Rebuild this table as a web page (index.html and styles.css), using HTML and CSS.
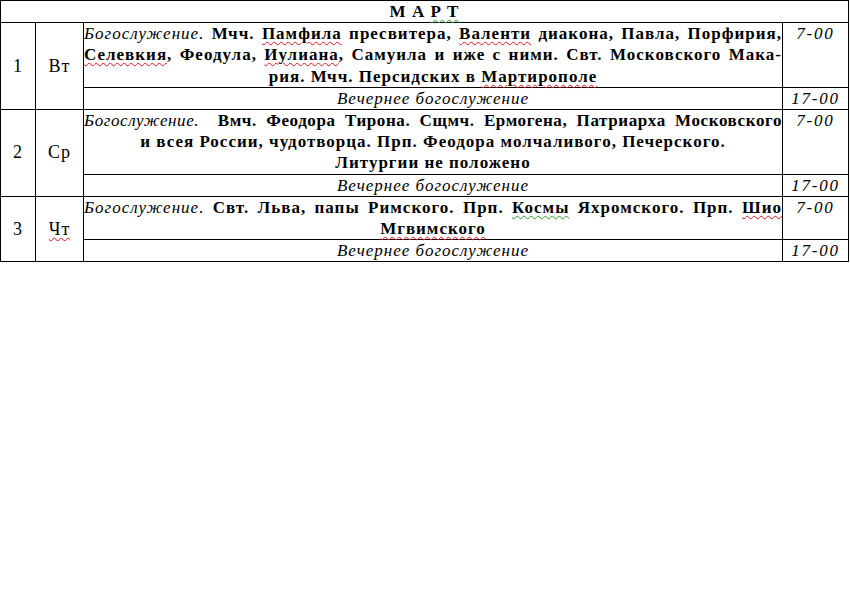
FILE: index.html
```html
<!DOCTYPE html>
<html lang="ru">
<head>
<meta charset="utf-8">
<title>Март</title>
<link rel="stylesheet" href="styles.css">
</head>
<body>
<table class="schedule">
  <colgroup>
    <col class="c-num">
    <col class="c-day">
    <col class="c-desc">
    <col class="c-time">
  </colgroup>
  <tr class="month-row">
    <th colspan="4" class="month">М А <span class="gr">Р Т</span></th>
  </tr>

  <tr class="desc-row">
    <td rowspan="2" class="num">1</td>
    <td rowspan="2" class="day">Вт</td>
    <td class="desc">
      <span class="line full"><i class="lead">Богослужение.</i> Мчч. <span class="sp">Памфила</span> пресвитера, <span class="sp">Валенти</span> диакона, Павла, Порфирия,</span>
      <span class="line full"><span class="sp">Селевкия</span>, Феодула, <span class="sp">Иулиана</span>, Самуила и иже с ними. Свт. Московского Мака-</span>
      <span class="line last">рия. Мчч. Персидских в <span class="sp">Мартирополе</span></span>
    </td>
    <td class="time">7-00</td>
  </tr>
  <tr class="eve-row">
    <td class="evening">Вечернее богослужение</td>
    <td class="time eve">17-00</td>
  </tr>

  <tr class="desc-row">
    <td rowspan="2" class="num">2</td>
    <td rowspan="2" class="day">Ср</td>
    <td class="desc">
      <span class="line full tight"><i class="lead">Богослужение.</i>&nbsp; Вмч. Феодора Тирона. Сщмч. Ермогена, Патриарха Московского</span>
      <span class="line last">и всея России, чудотворца. Прп. Феодора молчаливого, Печерского.</span>
      <span class="line last">Литургии не положено</span>
    </td>
    <td class="time">7-00</td>
  </tr>
  <tr class="eve-row">
    <td class="evening">Вечернее богослужение</td>
    <td class="time eve">17-00</td>
  </tr>

  <tr class="desc-row">
    <td rowspan="2" class="num">3</td>
    <td rowspan="2" class="day"><span class="sp">Чт</span></td>
    <td class="desc">
      <span class="line full"><i class="lead">Богослужение.</i> Свт. Льва, папы Римского. Прп. <span class="gr">Космы</span> Яхромского. Прп. <span class="sp">Шио</span></span>
      <span class="line last"><span class="sp">Мгвимского</span></span>
    </td>
    <td class="time">7-00</td>
  </tr>
  <tr class="eve-row">
    <td class="evening">Вечернее богослужение</td>
    <td class="time eve">17-00</td>
  </tr>
</table>
</body>
</html>
```

FILE: styles.css
```css
html, body {
  margin: 0;
  padding: 0;
  background: #fff;
}

body {
  font-family: "Liberation Serif", "Times New Roman", serif;
  font-size: 17px;
  color: #000;
}

.schedule {
  border-collapse: collapse;
  width: 849px;
  table-layout: fixed;
  line-height: 21.2px;
}

.c-num { width: 35px; }
.c-day { width: 48px; }
.c-desc { width: 699px; }
.c-time { width: 66px; }

.schedule th,
.schedule td {
  border: 1px solid #000;
  padding: 0;
}

.month {
  font-weight: bold;
  text-align: center;
  letter-spacing: 1px;
  height: 21px;
}

.num,
.day {
  text-align: center;
  vertical-align: middle;
  font-size: 18px;
  letter-spacing: 1px;
}

.desc {
  font-weight: bold;
  padding: 0 5px 0 6px;
  vertical-align: top;
  letter-spacing: 1px;
}

.lead {
  font-weight: normal;
  font-style: italic;
}

.line {
  display: block;
  white-space: nowrap;
}

.line.full {
  text-align: justify;
  text-align-last: justify;
  word-spacing: -3px;
}

.line.tight {
  letter-spacing: 0.6px;
}

.line.last {
  text-align: center;
}

.time {
  font-style: italic;
  text-align: center;
  vertical-align: top;
  letter-spacing: 1.8px;
  padding-left: 2px;
}

.evening {
  font-style: italic;
  text-align: center;
  letter-spacing: 1px;
  height: 21px;
}

.sp {
  text-decoration: underline wavy #e0141e;
  text-decoration-thickness: 1px;
  text-underline-offset: 2px;
}

.gr {
  text-decoration: underline wavy #2aa12a;
  text-decoration-thickness: 1px;
  text-underline-offset: 2px;
}
```
